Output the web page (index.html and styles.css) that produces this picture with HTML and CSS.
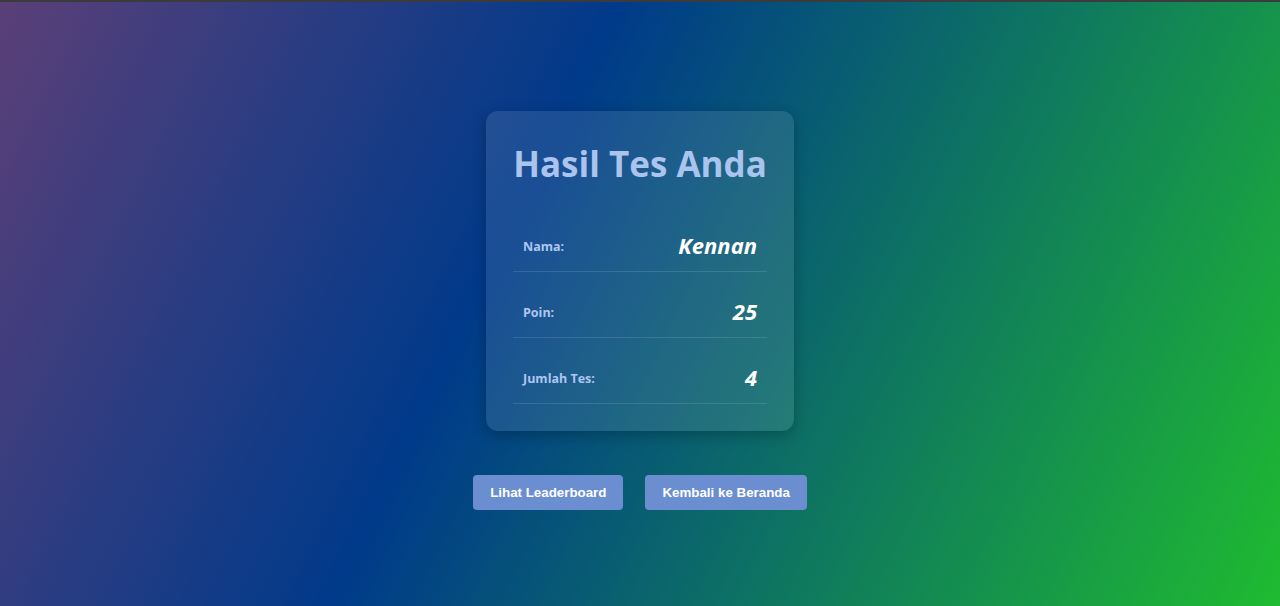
FILE: index.html
```html
<!DOCTYPE html>
<html lang="id">
<head>
<meta charset="utf-8">
<title>Hasil Tes Anda</title>
<link rel="stylesheet" href="styles.css">
</head>
<body>
<div class="topline"></div>
<main class="page">
  <section class="card">
    <h1 class="title">Hasil Tes Anda</h1>
    <div class="rows">
      <div class="row"><span class="label">Nama:</span><span class="value">Kennan</span></div>
      <div class="row"><span class="label">Poin:</span><span class="value">25</span></div>
      <div class="row"><span class="label">Jumlah Tes:</span><span class="value">4</span></div>
    </div>
  </section>
  <div class="actions">
    <button class="btn">Lihat Leaderboard</button>
    <button class="btn">Kembali ke Beranda</button>
  </div>
</main>
</body>
</html>
```
FILE: styles.css
```css
html, body {
  margin: 0;
  padding: 0;
  height: 100%;
}
body {
  font-family: "Open Sans", "Noto Sans", sans-serif;
  background: linear-gradient(115.6deg, #5b3f78 0%, #003a8a 39.5%, #1fbb30 100%);
  overflow: hidden;
}
.topline {
  height: 2px;
  background: #3b3b3d;
}
.page {
  display: flex;
  flex-direction: column;
  align-items: center;
  padding-top: 109px;
}
.card {
  width: 308px;
  box-sizing: border-box;
  padding: 27px 27px 27px;
  background: rgba(255, 255, 255, 0.1);
  border-radius: 12px;
  box-shadow: 0 4px 14px rgba(0, 0, 0, 0.25);
}
.title {
  margin: 0;
  font-size: 35px;
  line-height: 52px;
  font-weight: 700;
  color: #aac4ee;
  text-align: center;
  letter-spacing: 0;
}
.rows {
  display: flex;
  flex-direction: column;
  gap: 16px;
  margin-top: 32px;
}
.row {
  display: flex;
  justify-content: space-between;
  align-items: center;
  height: 29px;
  padding: 10px 10px;
  border-bottom: 1px solid rgba(255, 255, 255, 0.12);
}
.label {
  font-size: 12.5px;
  font-weight: 700;
  color: #aec6f0;
}
.value {
  font-size: 22px;
  line-height: 26px;
  font-weight: 700;
  font-style: italic;
  color: #ffffff;
  padding-bottom: 3px;
}
.actions {
  display: flex;
  gap: 22px;
  margin-top: 44px;
}
.btn {
  font-family: "Liberation Sans", Arial, sans-serif;
  font-size: 13.333px;
  font-weight: 700;
  color: #ffffff;
  background: #6a8ecf;
  border: none;
  border-radius: 4px;
  height: 35px;
  padding: 0 17px;
  cursor: pointer;
}
```
